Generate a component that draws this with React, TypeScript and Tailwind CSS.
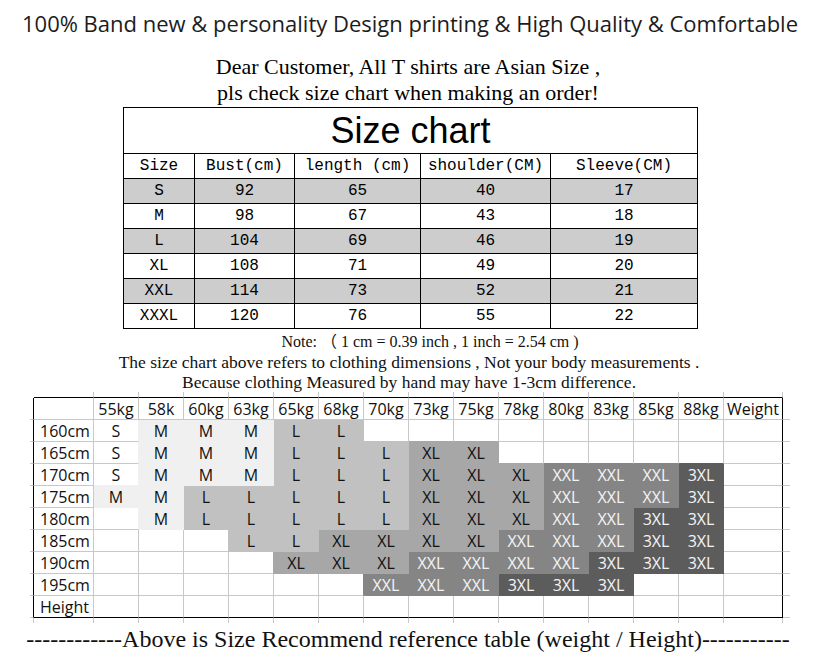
import { clsx } from 'clsx'

const chartHead = ['Size', 'Bust(cm)', 'length (cm)', 'shoulder(CM)', 'Sleeve(CM)']
const chartRows = [
  ['S', '92', '65', '40', '17'],
  ['M', '98', '67', '43', '18'],
  ['L', '104', '69', '46', '19'],
  ['XL', '108', '71', '49', '20'],
  ['XXL', '114', '73', '52', '21'],
  ['XXXL', '120', '76', '55', '22'],
]

const weights = ['55kg', '58k', '60kg', '63kg', '65kg', '68kg', '70kg', '73kg', '75kg', '78kg', '80kg', '83kg', '85kg', '88kg']
const heights = ['160cm', '165cm', '170cm', '175cm', '180cm', '185cm', '190cm', '195cm']

// recommended size per height (row) / weight (column)
const rec: string[][] = [
  ['S', 'M', 'M', 'M', 'L', 'L', '', '', '', '', '', '', '', ''],
  ['S', 'M', 'M', 'M', 'L', 'L', 'L', 'XL', 'XL', '', '', '', '', ''],
  ['S', 'M', 'M', 'M', 'L', 'L', 'L', 'XL', 'XL', 'XL', 'XXL', 'XXL', 'XXL', '3XL'],
  ['M', 'M', 'L', 'L', 'L', 'L', 'L', 'XL', 'XL', 'XL', 'XXL', 'XXL', 'XXL', '3XL'],
  ['', 'M', 'L', 'L', 'L', 'L', 'L', 'XL', 'XL', 'XL', 'XXL', 'XXL', '3XL', '3XL'],
  ['', '', '', 'L', 'L', 'XL', 'XL', 'XL', 'XL', 'XXL', 'XXL', 'XXL', '3XL', '3XL'],
  ['', '', '', '', 'XL', 'XL', 'XL', 'XXL', 'XXL', 'XXL', 'XXL', '3XL', '3XL', '3XL'],
  ['', '', '', '', '', '', 'XXL', 'XXL', 'XXL', '3XL', '3XL', '3XL', '', ''],
]

// fill per size; S stays white like in the sheet
const fillBg: Record<string, string> = {
  M: 'bg-[#f0f0f0]',
  L: 'bg-[#c1c1c1]',
  XL: 'bg-[#a7a7a7]',
  XXL: 'bg-[#858585]',
  '3XL': 'bg-[#5c5c5c]',
}
const rColor: Record<string, string> = {
  gray: 'border-r-[#c8c8c8]',
  black: 'border-r-black',
  M: 'border-r-[#f0f0f0]',
  L: 'border-r-[#c1c1c1]',
  XL: 'border-r-[#a7a7a7]',
  XXL: 'border-r-[#858585]',
  '3XL': 'border-r-[#5c5c5c]',
}
const bColor: Record<string, string> = {
  gray: 'border-b-[#c8c8c8]',
  black: 'border-b-black',
  M: 'border-b-[#f0f0f0]',
  L: 'border-b-[#c1c1c1]',
  XL: 'border-b-[#a7a7a7]',
  XXL: 'border-b-[#858585]',
  '3XL': 'border-b-[#5c5c5c]',
}

const LAST_ROW = 10
const LAST_COL = 16

function fillAt(r: number, c: number) {
  if (r < 2 || r > 9 || c < 2 || c > 15) return ''
  const v = rec[r - 2][c - 2]
  return v === 'S' ? '' : v
}

function sizeAt(r: number, c: number) {
  if (r < 2 || r > 9 || c < 2 || c > 15) return ''
  return rec[r - 2][c - 2]
}

function GridCell({ r, c }: { r: number; c: number }) {
  // tick marks of the sheet around the black frame
  if (r === 0) {
    if (c === 0 || c === 17) return <div />
    return <div className="border-r border-b border-r-[#c8c8c8] border-b-black" />
  }
  if (r === 11) {
    if (c === 17) return <div />
    return <div className="border-r border-r-[#c8c8c8]" />
  }
  if (c === 0) return <div className="border-r border-b border-r-black border-b-[#c8c8c8]" />
  if (c === 17) return <div className="border-b border-b-[#c8c8c8]" />

  const fill = fillAt(r, c)
  let rc = 'gray'
  if (c === LAST_COL) rc = 'black'
  else if (c !== 1) rc = fill || fillAt(r, c + 1) || 'gray'
  let bc = 'gray'
  if (r === LAST_ROW) bc = 'black'
  else if (r !== 1) bc = fill || fillAt(r + 1, c) || 'gray'

  let text = ''
  if (r === 1 && c >= 2 && c <= 15) text = weights[c - 2]
  else if (r === 1 && c === 16) text = 'Weight'
  else if (c === 1 && r >= 2 && r <= 9) text = heights[r - 2]
  else if (c === 1 && r === 10) text = 'Height'
  else text = sizeAt(r, c)

  const size = sizeAt(r, c)
  const light = size === 'XXL' || size === '3XL'

  return (
    <div
      className={clsx(
        'border-r border-b flex items-center leading-none whitespace-nowrap',
        c === 1 ? 'pl-[6px]' : 'justify-center',
        rColor[rc],
        bColor[bc],
        fill && fillBg[fill],
        light ? 'text-[#f4f4f4]' : 'text-[#111]',
      )}
    >
      {text}
    </div>
  )
}

function SizeChart() {
  return (
    <div className="ml-[123px] mt-px w-[575px] border border-black font-['Liberation_Mono',monospace] text-[16px] text-black">
      <div className="h-[46px] border-b border-black flex items-center justify-center font-['Liberation_Sans',Arial,sans-serif] text-[36px] leading-none">
        Size chart
      </div>
      <div className="grid grid-cols-[71px_100px_126px_130px_146px]">
        {chartHead.map((h, i) => (
          <div
            key={h}
            className={clsx('h-[25px] border-b border-black flex items-center justify-center whitespace-pre', i < 4 && 'border-r')}
          >
            {h}
          </div>
        ))}
        {chartRows.map((row, ri) =>
          row.map((v, i) => (
            <div
              key={`${ri}-${i}`}
              className={clsx(
                'flex items-center justify-center border-black',
                ri < chartRows.length - 1 ? 'h-[25px] border-b' : 'h-[24px]',
                i < 4 && 'border-r',
                ri % 2 === 0 && 'bg-[#cdcdcd]',
              )}
            >
              {v}
            </div>
          )),
        )}
      </div>
    </div>
  )
}

export default function App() {
  const rows = Array.from({ length: 12 }, (_, r) => r)
  const cols = Array.from({ length: 18 }, (_, c) => c)

  return (
    <div className="w-[832px] h-[660px] bg-white overflow-hidden text-black">
      <div className="h-[46px] flex items-center justify-center pr-[12px] font-['Open_Sans',sans-serif] text-[22px] text-[#1c1c1c] whitespace-nowrap">
        100% Band new &amp; personality Design printing &amp; High Quality &amp; Comfortable
      </div>

      <div className="mt-[8px] pr-[16px] text-center font-['Liberation_Serif',serif] text-[22px] leading-[26px]">
        <p>Dear Customer, All T shirts are Asian Size ,</p>
        <p>pls check size chart when making an order!</p>
      </div>

      <SizeChart />

      <div className="mt-[3px] pr-[14px] text-center font-['Liberation_Serif','Noto_Sans_CJK_SC',serif] text-[17.5px] leading-[20px] text-[#111] whitespace-nowrap">
        <p className="pl-[42px] text-[16px]">Note: （ 1 cm = 0.39 inch , 1 inch = 2.54 cm )</p>
        <p>The size chart above refers to clothing dimensions , Not your body measurements .</p>
        <p>Because clothing Measured by hand may have 1-3cm difference.</p>
      </div>

      <div className="ml-[30px] grid w-max grid-cols-[4px_60px_repeat(14,45px)_59px_7px] grid-rows-[6px_repeat(10,22px)_5px] font-['Open_Sans',sans-serif] text-[16px]">
        {rows.map((r) => cols.map((c) => <GridCell key={`${r}-${c}`} r={r} c={c} />))}
      </div>

      <div className="mt-[4px] pr-[16px] text-center font-['Liberation_Serif',serif] text-[24px] leading-[24px] whitespace-nowrap text-[#111]">
        ------------Above is Size Recommend reference table (weight / Height)-----------
      </div>
    </div>
  )
}
